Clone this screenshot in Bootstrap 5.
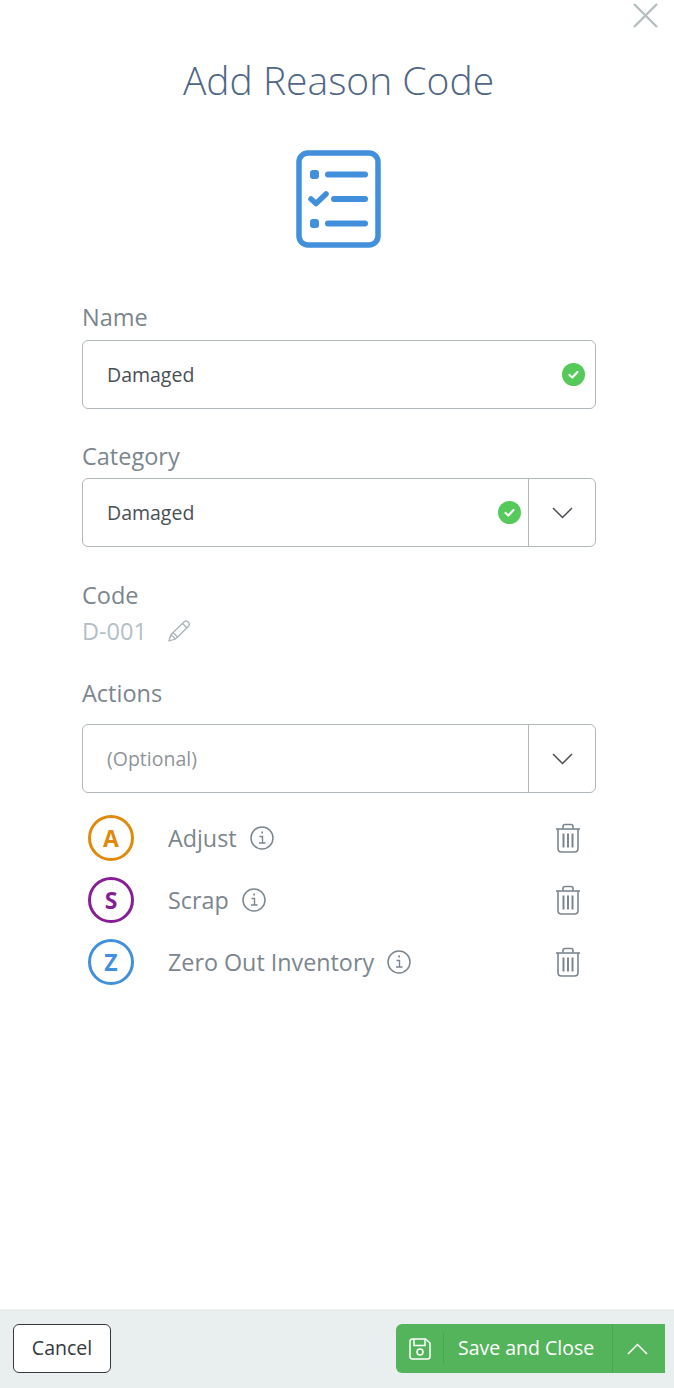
<!DOCTYPE html>
<html>
<head>
    <meta charset="UTF-8">
    <link href="https://cdn.jsdelivr.net/npm/bootstrap@5.3.0/dist/css/bootstrap.min.css" rel="stylesheet">
    <style>
        html, body { height: 100%; }
        body { font-family: "Open Sans", "Liberation Sans", sans-serif; background: #fff; color: #7b868e; overflow: hidden; }
        .page-wrap { height: 1388px; position: relative; padding-top: 56px; }
        .close-x { position: absolute; top: 2px; right: 15px; width: 27px; height: 27px; padding: 0; border: 0; background: none; line-height: 0; }
        .page-title { font-family: "Open Sans", sans-serif; font-weight: 300; font-size: 39px; line-height: 48px; color: #4f6787; margin: 0; padding-left: 3px; text-align: center; }
        .title-icon { margin-top: 46px; padding-left: 3px; height: 97px; line-height: 0; }
        .form-area { padding: 0 78px 0 82px; margin-top: 55px; }
        .field-label { font-size: 23.5px; line-height: 30px; color: #7b868e; margin: 0 0 7px; display: block; }
        .label-first { margin-bottom: 8px; }
        .label-code { margin-bottom: 6px; }
        .label-actions { margin-bottom: 16px; }
        .label-category { margin-bottom: 7px; }
        .field-wrap { position: relative; height: 69px; margin-bottom: 33px; }
        .field-wrap.field-first { margin-bottom: 32px; }
        .field-wrap.field-last { margin-bottom: 14px; }
        .field-wrap .form-control { height: 69px; font-size: 19.5px; color: #4a4f54; padding-left: 24px; border: 1px solid #b0b8bb; border-radius: 6px; font-family: inherit; box-shadow: none; }
        .field-wrap .form-control::placeholder { color: #8f9598; opacity: 1; }
        .field-wrap .caret-btn { width: 68px; padding: 0; background: #fff; border: 1px solid #b0b8bb; border-radius: 0 6px 6px 0; margin-left: -1px; line-height: 0; }
        .field-wrap .input-group > .form-control { border-radius: 6px 0 0 6px; }
        .ok-dot { position: absolute; top: 23px; width: 23px; height: 23px; z-index: 6; line-height: 0; }
        .dot-name { right: 11px; }
        .dot-category { right: 75px; }
        .code-value { font-size: 23.5px; line-height: 30px; color: #b3bfc6; margin-bottom: 32px; gap: 20px; }
        .reason-row { height: 62px; }
        .letter-ring { width: 46px; height: 46px; border-radius: 50%; border: 3px solid; font-size: 23px; font-weight: 700; margin-left: 6px; margin-right: 34px; flex: none; }
        .ring-a { color: #e08a0b; }
        .ring-s { color: #861f94; }
        .ring-z { color: #428fdb; }
        .reason-text { font-size: 23.3px; color: #7b868e; }
        .info-ico { margin-left: 13px; line-height: 0; flex: none; }
        .trash-ico { margin-left: auto; margin-right: 15px; line-height: 0; flex: none; }
        .bottom-bar { position: absolute; left: 0; right: 0; bottom: 0; height: 79px; background: #e9eeee; padding: 15px 9px 0 13px; }
        .cancel-btn { width: 98px; height: 49px; background: #fff; border: 1px solid #343a40; border-radius: 6px; font-size: 19.5px; color: #343a40; padding: 0 0 2px; font-family: inherit; }
        .save-group { height: 49px; width: 269px; background: #54b45b; border-radius: 6px 0 0 6px; color: #fff; }
        .save-ico { width: 48px; height: 31px; border-right: 1px solid #4aa551; line-height: 0; }
        .save-label { font-size: 19.5px; padding: 0 0 2px 14px; width: 168px; color: #fff; white-space: nowrap; }
        .save-caret { flex: 1; height: 100%; border-left: 1px solid #4aa551; line-height: 0; padding-right: 3px; }
    </style>
</head>
<body>
    <div class="page-wrap">
        <button class="close-x" type="button" aria-label="Close">
            <svg width="27" height="27" viewBox="0 0 27 27"><path d="M2 2L25 25M25 2L2 25" stroke="#b4bfc1" stroke-width="2.4" fill="none"/></svg>
        </button>

        <h1 class="page-title">Add Reason Code</h1>

        <div class="title-icon text-center">
            <svg width="86" height="98" viewBox="0 0 86 98" fill="none">
                <rect x="3" y="3" width="79" height="92" rx="9" stroke="#428fdb" stroke-width="5.5"/>
                <rect x="14" y="20" width="9" height="9" rx="3" fill="#428fdb"/>
                <rect x="14" y="69" width="9" height="9" rx="3" fill="#428fdb"/>
                <path d="M32 24.500H69M38 49H69M32 73.500H69" stroke="#428fdb" stroke-width="6" stroke-linecap="round"/>
                <path d="M15 49L20 53.500L30 44" stroke="#428fdb" stroke-width="5.500" stroke-linecap="round" stroke-linejoin="round"/>
            </svg>
        </div>

        <div class="form-area">
            <label class="field-label label-first">Name</label>
            <div class="field-wrap field-first">
                <input class="form-control" type="text" value="Damaged">
                <span class="ok-dot dot-name">
                    <svg width="23" height="23" viewBox="0 0 23 23"><circle cx="11.500" cy="11.500" r="11.500" fill="#55c95a"/><path d="M7.500 12L10.300 14.500L15.500 9" stroke="#fff" stroke-width="2.200" fill="none" stroke-linecap="round" stroke-linejoin="round"/></svg>
                </span>
            </div>

            <label class="field-label label-category">Category</label>
            <div class="field-wrap">
                <div class="input-group">
                    <input class="form-control" type="text" value="Damaged">
                    <button class="caret-btn" type="button">
                        <svg width="21" height="12" viewBox="0 0 21 12"><path d="M1 1L10.500 10.500L20 1" stroke="#4a4f54" stroke-width="1.500" fill="none"/></svg>
                    </button>
                </div>
                <span class="ok-dot dot-category">
                    <svg width="23" height="23" viewBox="0 0 23 23"><circle cx="11.500" cy="11.500" r="11.500" fill="#55c95a"/><path d="M7.500 12L10.300 14.500L15.500 9" stroke="#fff" stroke-width="2.200" fill="none" stroke-linecap="round" stroke-linejoin="round"/></svg>
                </span>
            </div>

            <label class="field-label label-code">Code</label>
            <div class="d-flex align-items-center code-value">
                <span>D-001</span>
                <svg width="24" height="24" viewBox="0 0 24 24" fill="none" stroke="#a9b3b8" stroke-width="1.300" stroke-linejoin="round"><path d="M2 22L4 15.500L17.500 2.500Q19 1.300 20.500 2.500L22 4Q23 5.500 21.800 7L8.500 20Z"/><path d="M4 15.500L8.500 20M6 13.500L10.500 18M15.500 4.500L20 9"/></svg>
            </div>

            <label class="field-label label-actions">Actions</label>
            <div class="field-wrap field-last">
                <div class="input-group">
                    <input class="form-control" type="text" placeholder="(Optional)">
                    <button class="caret-btn" type="button">
                        <svg width="21" height="12" viewBox="0 0 21 12"><path d="M1 1L10.500 10.500L20 1" stroke="#4a4f54" stroke-width="1.500" fill="none"/></svg>
                    </button>
                </div>
            </div>

            <div id="reasonList"></div>
        </div>

        <div class="bottom-bar d-flex justify-content-between">
            <button class="cancel-btn" type="button">Cancel</button>
            <div class="save-group d-flex align-items-center">
                <div class="save-ico d-flex align-items-center justify-content-center">
                    <svg width="22" height="22" viewBox="0 0 22 22" fill="none" stroke="#fff" stroke-width="1.500"><path d="M3.500 1H16.500L21 5V18.500Q21 21 18.500 21H3.500Q1 21 1 18.500V3.500Q1 1 3.500 1Z"/><path d="M5 1V7.500H16V1"/><circle cx="11" cy="14" r="3"/></svg>
                </div>
                <div class="save-label">Save and Close</div>
                <div class="save-caret d-flex align-items-center justify-content-center">
                    <svg width="21" height="12" viewBox="0 0 21 12"><path d="M1 11L10.500 1.500L20 11" stroke="#fff" stroke-width="1.500" fill="none"/></svg>
                </div>
            </div>
        </div>
    </div>

    <script src="https://cdn.jsdelivr.net/npm/bootstrap@5.3.0/dist/js/bootstrap.bundle.min.js"></script>
    <script>
        const acoes = [
            { letra: 'A', cor: 'ring-a', texto: 'Adjust' },
            { letra: 'S', cor: 'ring-s', texto: 'Scrap' },
            { letra: 'Z', cor: 'ring-z', texto: 'Zero Out Inventory' }
        ];
        const info = `<svg width="24" height="24" viewBox="0 0 24 24" fill="none" stroke="#7b868e"><circle cx="12" cy="12" r="11" stroke-width="1.500"/><path d="M9.500 10.500H12.500V17M9 17H15.500" stroke-width="1.400"/><path d="M11.300 6.500H13" stroke-width="2"/></svg>`;
        const trash = `<svg width="26" height="30" viewBox="0 0 26 30" fill="none" stroke="#7b868e" stroke-width="1.600"><path d="M1 6H25"/><path d="M8 5.500V3.500Q8 1.500 10 1.500H16Q18 1.500 18 3.500V5.500"/><path d="M3 6V25.500Q3 29 6.500 29H19.500Q23 29 23 25.500V6"/><path d="M8.500 10.500V24.500M13 10.500V24.500M17.500 10.500V24.500" stroke-width="2"/></svg>`;
        document.getElementById('reasonList').innerHTML = acoes.map(a => `
            <div class="reason-row d-flex align-items-center">
                <div class="letter-ring ${a.cor} d-flex align-items-center justify-content-center">${a.letra}</div>
                <span class="reason-text">${a.texto}</span>
                <span class="info-ico">${info}</span>
                <span class="trash-ico">${trash}</span>
            </div>`).join('');
    </script>
</body>
</html>
